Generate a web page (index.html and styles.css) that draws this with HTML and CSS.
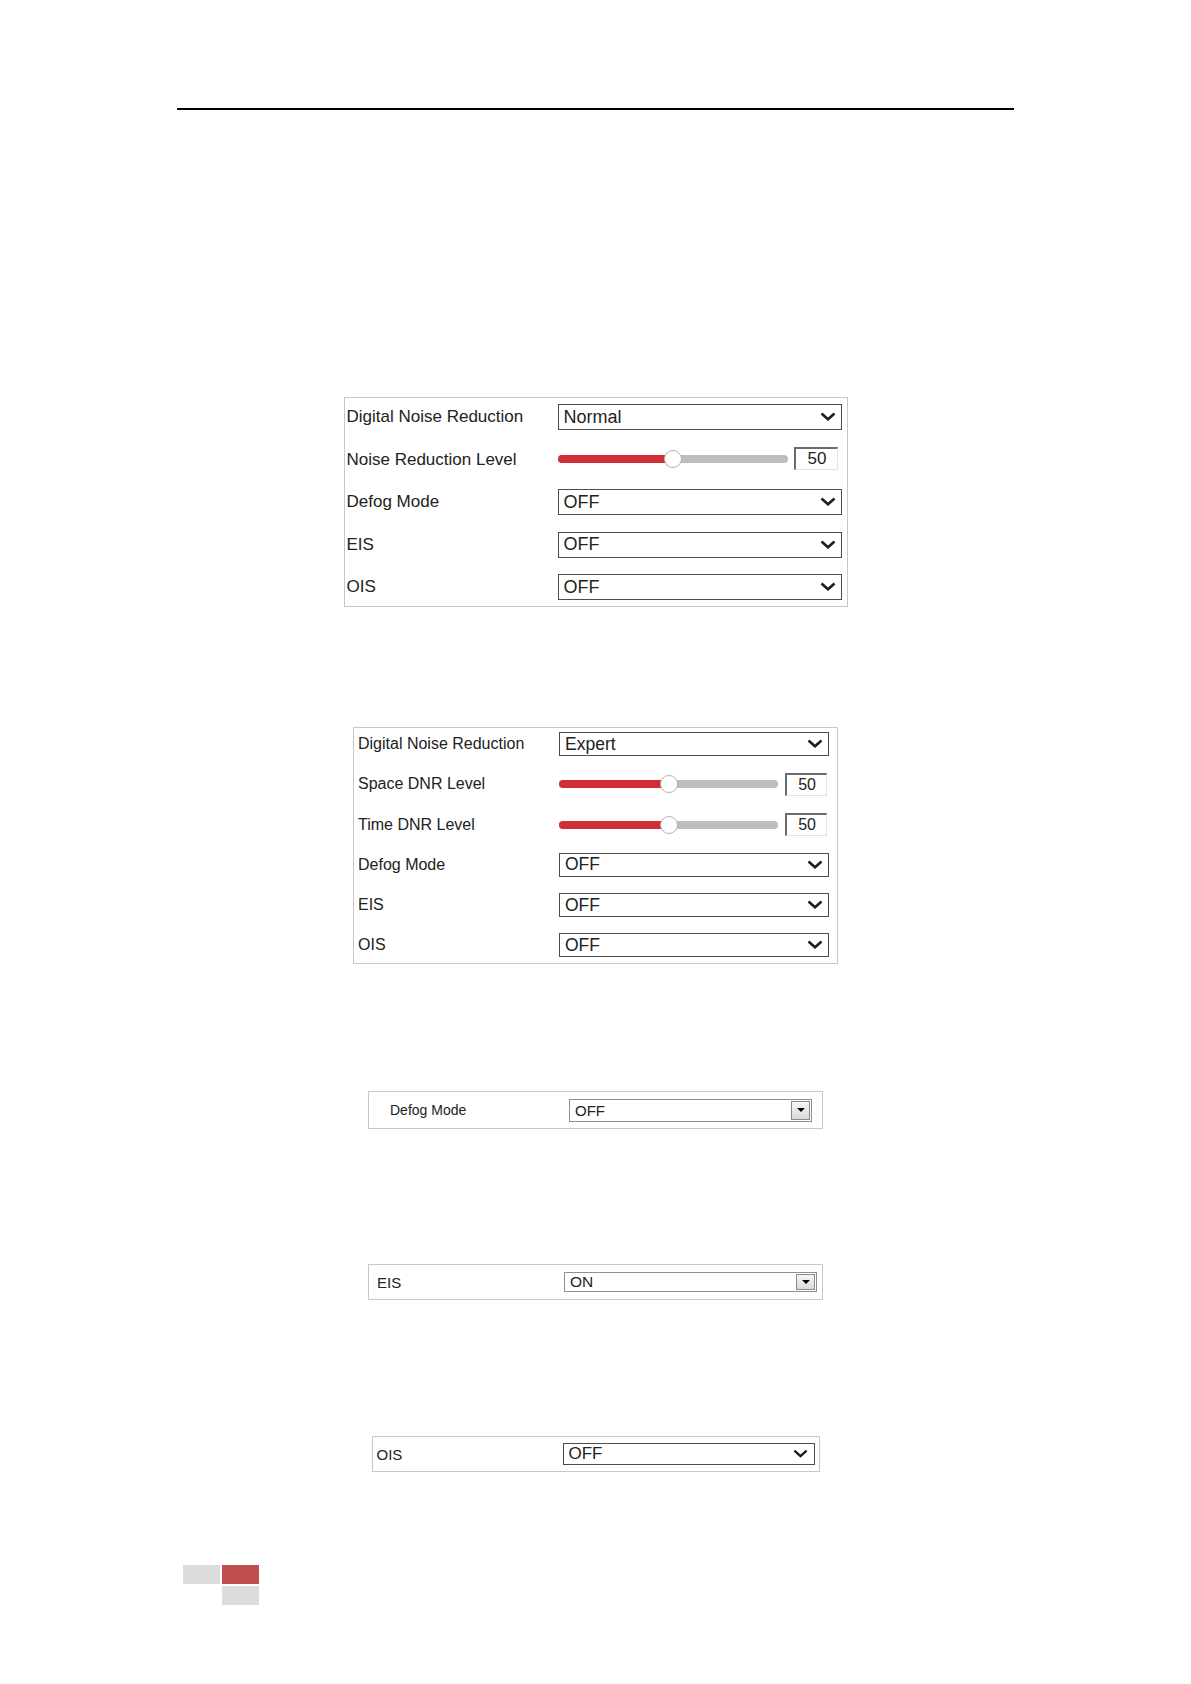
FILE: index.html
```html
<!DOCTYPE html>
<html lang="en">
<head>
  <meta charset="UTF-8" />
  <meta name="viewport" content="width=device-width, initial-scale=1.0" />
  <title>Image Enhancement Settings</title>
  <link rel="stylesheet" href="styles.css">
</head>
<body>
  <div class="page">
    <!-- Header rule -->
    <div class="rule"></div>

    <!-- Normal DNR mode -->
    <section class="panel panel-normal">
      <div class="row">
        <span class="label">Digital Noise Reduction</span>
        <div class="select">Normal<svg class="chevron" viewBox="0 0 16 9"><polyline points="1.5,1.5 8,7.3 14.5,1.5"/></svg></div>
      </div>
      <div class="row">
        <span class="label">Noise Reduction Level</span>
        <div class="slider">
          <div class="track"><div class="fill" style="width: 50%"></div><div class="thumb" style="left: 50%"></div></div>
          <div class="num">50</div>
        </div>
      </div>
      <div class="row">
        <span class="label">Defog Mode</span>
        <div class="select">OFF<svg class="chevron" viewBox="0 0 16 9"><polyline points="1.5,1.5 8,7.3 14.5,1.5"/></svg></div>
      </div>
      <div class="row">
        <span class="label">EIS</span>
        <div class="select">OFF<svg class="chevron" viewBox="0 0 16 9"><polyline points="1.5,1.5 8,7.3 14.5,1.5"/></svg></div>
      </div>
      <div class="row">
        <span class="label">OIS</span>
        <div class="select">OFF<svg class="chevron" viewBox="0 0 16 9"><polyline points="1.5,1.5 8,7.3 14.5,1.5"/></svg></div>
      </div>
    </section>

    <!-- Expert DNR mode -->
    <section class="panel panel-expert">
      <div class="row">
        <span class="label">Digital Noise Reduction</span>
        <div class="select">Expert<svg class="chevron" viewBox="0 0 16 9"><polyline points="1.5,1.5 8,7.3 14.5,1.5"/></svg></div>
      </div>
      <div class="row">
        <span class="label">Space DNR Level</span>
        <div class="slider">
          <div class="track"><div class="fill" style="width: 50%"></div><div class="thumb" style="left: 50%"></div></div>
          <div class="num">50</div>
        </div>
      </div>
      <div class="row">
        <span class="label">Time DNR Level</span>
        <div class="slider">
          <div class="track"><div class="fill" style="width: 50%"></div><div class="thumb" style="left: 50%"></div></div>
          <div class="num">50</div>
        </div>
      </div>
      <div class="row">
        <span class="label">Defog Mode</span>
        <div class="select">OFF<svg class="chevron" viewBox="0 0 16 9"><polyline points="1.5,1.5 8,7.3 14.5,1.5"/></svg></div>
      </div>
      <div class="row">
        <span class="label">EIS</span>
        <div class="select">OFF<svg class="chevron" viewBox="0 0 16 9"><polyline points="1.5,1.5 8,7.3 14.5,1.5"/></svg></div>
      </div>
      <div class="row">
        <span class="label">OIS</span>
        <div class="select">OFF<svg class="chevron" viewBox="0 0 16 9"><polyline points="1.5,1.5 8,7.3 14.5,1.5"/></svg></div>
      </div>
    </section>

    <!-- Single settings -->
    <section class="panel panel-single panel-defog">
      <div class="row">
        <span class="label">Defog Mode</span>
        <div class="select classic">OFF<span class="drop"><i></i></span></div>
      </div>
    </section>

    <section class="panel panel-single panel-eis">
      <div class="row">
        <span class="label">EIS</span>
        <div class="select classic">ON<span class="drop"><i></i></span></div>
      </div>
    </section>

    <section class="panel panel-single panel-ois">
      <div class="row">
        <span class="label">OIS</span>
        <div class="select">OFF<svg class="chevron" viewBox="0 0 16 9"><polyline points="1.5,1.5 8,7.3 14.5,1.5"/></svg></div>
      </div>
    </section>

    <!-- Footer mark -->
    <div class="mark">
      <span class="blk gray"></span>
      <span class="blk red"></span>
      <span class="blk empty"></span>
      <span class="blk gray"></span>
    </div>
  </div>
</body>
</html>
```

FILE: styles.css
```css
/* Base */
* {
  margin: 0;
  padding: 0;
  box-sizing: border-box;
}
body {
  background: #fff;
  color: #222;
  font-family: "Liberation Sans", Arial, sans-serif;
}
.page {
  width: 1191px;
  min-height: 1684px;
  display: flex;
  flex-direction: column;
  align-items: center;
}

/* Header rule */
.rule {
  width: 837px;
  height: 2px;
  margin-top: 108px;
  margin-left: -1px;
  background: #000;
}

/* Panels */
.panel {
  border: 1px solid #c8c8c8;
  display: flex;
  flex-direction: column;
}
.row {
  display: grid;
  align-items: center;
}
.label {
  white-space: nowrap;
}
.select {
  position: relative;
  display: flex;
  align-items: center;
  border: 1px solid #4d4d4d;
  background: #fff;
  padding-left: 5px;
  color: #222;
}
.chevron {
  position: absolute;
  top: 50%;
  right: 5px;
  width: 16px;
  height: 9px;
  margin-top: -5px;
}
.chevron polyline {
  fill: none;
  stroke: #1e1e1e;
  stroke-width: 2.6;
}

/* Slider */
.slider {
  display: flex;
  align-items: center;
}
.track {
  position: relative;
  height: 8px;
  border-radius: 4px;
  background: #bdbdbd;
}
.fill {
  height: 100%;
  border-radius: 4px 0 0 4px;
  background: #d12e37;
}
.thumb {
  position: absolute;
  top: 50%;
  width: 18px;
  height: 18px;
  margin: -9px 0 0 -9px;
  border: 1px solid #b3b3b3;
  border-radius: 50%;
  background: #fff;
}
.num {
  height: 23px;
  border-top: 2px solid #6b6b6b;
  border-left: 2px solid #6b6b6b;
  border-right: 1px solid #e2e2e2;
  border-bottom: 1px solid #e2e2e2;
  text-align: right;
  padding-right: 10px;
  line-height: 19px;
}

/* Normal mode panel */
.panel-normal {
  width: 504px;
  margin-top: 287px;
  padding: 6px 0 6px 2px;
  gap: 16.5px;
  font-size: 17px;
}
.panel-normal .row {
  grid-template-columns: 211px 284px;
  height: 26px;
}
.panel-normal .select {
  height: 26px;
  font-size: 18px;
}
.panel-normal .slider {
  margin-top: -2px;
}
.panel-normal .track {
  width: 230px;
}
.panel-normal .num {
  width: 44px;
  margin-left: 6px;
  font-size: 17px;
}

/* Expert mode panel */
.panel-expert {
  width: 485px;
  margin-top: 120px;
  padding: 4px 0 6px 4px;
  gap: 16.3px;
  font-size: 16px;
}
.panel-expert .row {
  grid-template-columns: 201px 270px;
  height: 24px;
}
.panel-expert .select {
  height: 24px;
  font-size: 17.5px;
}
.panel-expert .track {
  width: 219px;
}
.panel-expert .num {
  width: 42px;
  margin-left: 7px;
  font-size: 16px;
}

/* Single setting panels */
.panel-single {
  justify-content: center;
}
.panel-defog {
  width: 455px;
  height: 38px;
  margin-top: 127px;
  padding-left: 21px;
  font-size: 14px;
}
.panel-defog .row {
  grid-template-columns: 179px 243px;
}
.panel-defog .select {
  height: 23px;
  font-size: 15px;
}
.panel-eis {
  width: 455px;
  height: 36px;
  margin-top: 135px;
  padding-left: 8px;
  font-size: 15px;
}
.panel-eis .row {
  grid-template-columns: 187px 253px;
}
.panel-eis .select {
  height: 20px;
  font-size: 15.5px;
}
.panel-ois {
  width: 448px;
  height: 36px;
  margin-top: 136px;
  padding-left: 4px;
  font-size: 15px;
}
.panel-ois .row {
  grid-template-columns: 186px 252px;
}
.panel-ois .select {
  height: 22px;
  font-size: 17px;
}
.panel-ois .chevron {
  right: 6px;
  width: 15px;
}

/* Classic dropdown with button */
.select.classic {
  border-color: #8f8f8f;
}
.drop {
  position: absolute;
  right: 1px;
  top: 1px;
  bottom: 1px;
  width: 19px;
  border: 1px solid #8a8a8a;
  background: linear-gradient(#f6f6f6, #d9d9d9);
  display: flex;
  align-items: center;
  justify-content: center;
}
.drop i {
  width: 0;
  height: 0;
  border-left: 4px solid transparent;
  border-right: 4px solid transparent;
  border-top: 4px solid #000;
}

/* Footer mark */
.mark {
  align-self: flex-start;
  margin: 93px 0 0 183px;
  display: grid;
  grid-template-columns: 37px 37px;
  grid-auto-rows: 19px;
  gap: 2px;
}
.blk.gray {
  background: #dcdcdc;
}
.blk.red {
  background: #c0504d;
}
```
